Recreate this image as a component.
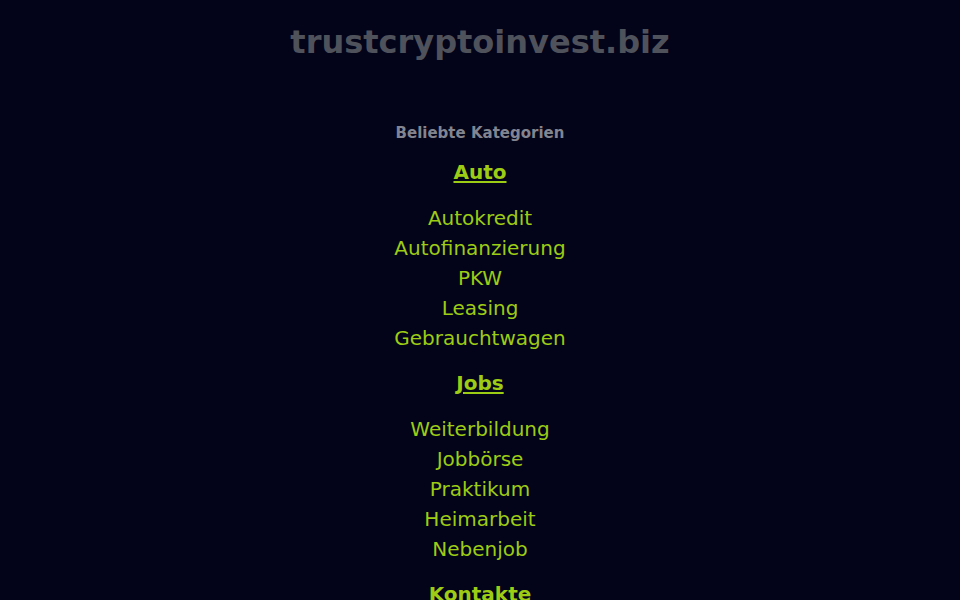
import React from 'react';

const categories = [
  { title: 'Auto', links: ['Autokredit', 'Autofinanzierung', 'PKW', 'Leasing', 'Gebrauchtwagen'] },
  { title: 'Jobs', links: ['Weiterbildung', 'Jobbörse', 'Praktikum', 'Heimarbeit', 'Nebenjob'] },
  { title: 'Kontakte', links: ['Singles', 'Partnersuche', 'Dating', 'Chat', 'Flirt'] },
];

export default function App() {
  return (
    <div className="min-h-screen bg-[#03031a] text-center font-['DejaVu_Sans',sans-serif]">
      <h1 className="pt-[23px] text-[32px] leading-[38px] font-bold text-[#4f525a]">
        trustcryptoinvest.biz
      </h1>

      <main className="mt-[62px]">
        <h2 className="text-[15px] leading-[20px] font-bold text-[#82858f]">Beliebte Kategorien</h2>

        {categories.map((cat) => (
          <section key={cat.title} className="mt-[18px] first-of-type:mt-[17px]">
            <a href="#" className="text-[20px] leading-[24px] font-bold text-[#9ccc14] underline underline-offset-2">
              {cat.title}
            </a>
            <ul className="mt-[17px]">
              {cat.links.map((l) => (
                <li key={l} className="text-[20px] leading-[30px] text-[#9ccc14]">
                  <a href="#">{l}</a>
                </li>
              ))}
            </ul>
          </section>
        ))}
      </main>
    </div>
  );
}
